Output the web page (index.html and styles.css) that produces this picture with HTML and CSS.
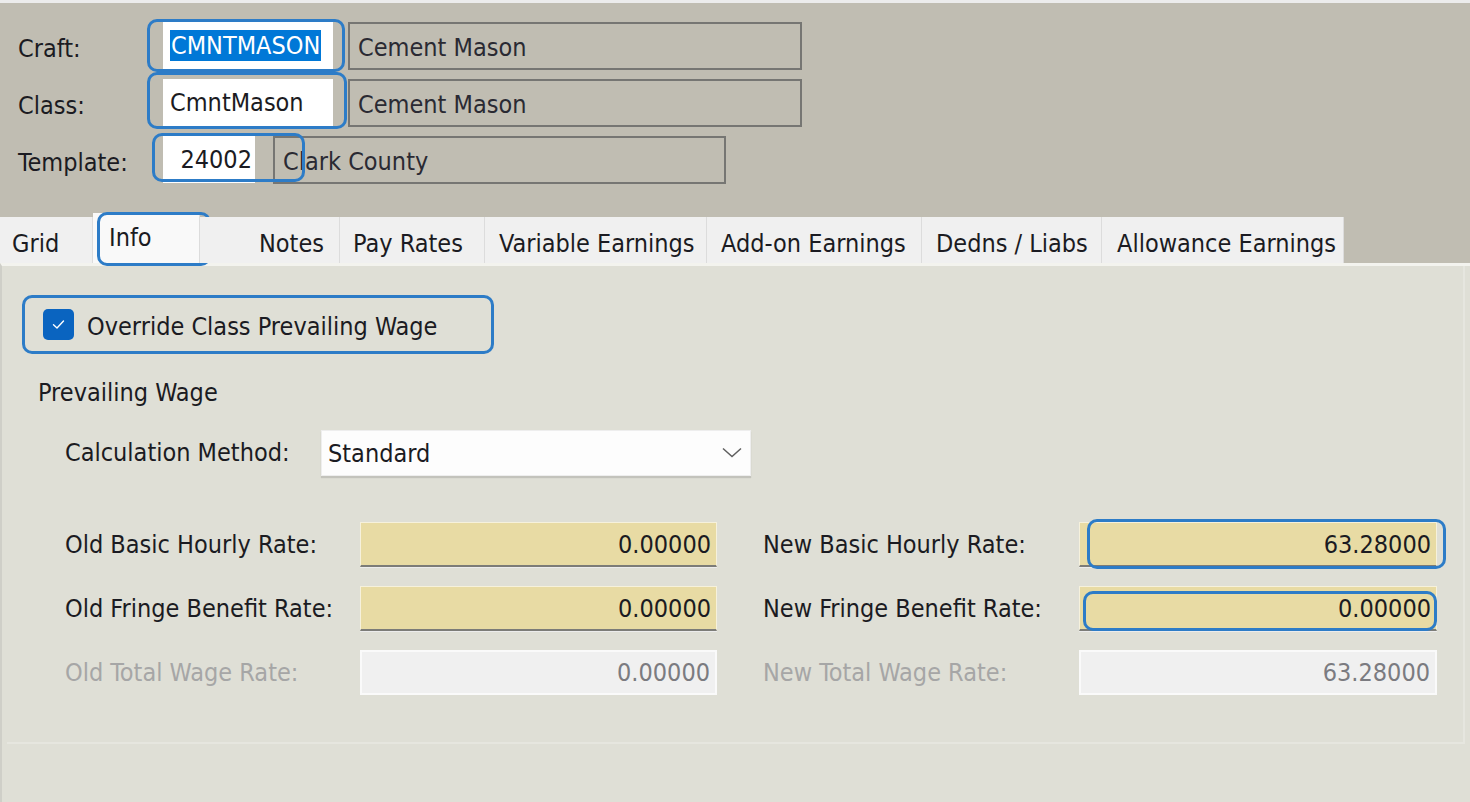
FILE: index.html
```html
<!DOCTYPE html>
<html>
<head>
<meta charset="utf-8">
<link rel="stylesheet" href="styles.css">
</head>
<body>
<div class="window">
  <div class="topline"></div>
  <header class="head">
    <div class="hrow">
      <span class="hlabel">Craft:</span>
      <div class="code code-wide">
        <span class="sel">CMNTMASON</span>
        <span class="mark mark-craft"></span>
      </div>
      <div class="desc desc-wide">Cement Mason</div>
    </div>
    <div class="hrow">
      <span class="hlabel">Class:</span>
      <div class="code code-wide">
        <span class="codetext">CmntMason</span>
        <span class="mark mark-class"></span>
      </div>
      <div class="desc desc-wide">Cement Mason</div>
    </div>
    <div class="hrow">
      <span class="hlabel">Template:</span>
      <div class="code code-narrow">
        <span class="codetext">24002</span>
        <span class="mark mark-template"></span>
      </div>
      <div class="desc desc-narrow">Clark County</div>
    </div>
  </header>
  <nav class="tabs">
    <div class="tab tab-grid">Grid</div>
    <div class="tab tab-info">Info<span class="mark mark-info"></span></div>
    <div class="tab tab-notes">Notes</div>
    <div class="tab tab-pay">Pay Rates</div>
    <div class="tab tab-var">Variable Earnings</div>
    <div class="tab tab-add">Add-on Earnings</div>
    <div class="tab tab-ded">Dedns / Liabs</div>
    <div class="tab tab-allow">Allowance Earnings</div>
  </nav>
  <main class="panel">
    <div class="inner">
      <div class="checkrow">
        <span class="checkbox">
          <svg width="17" height="17" viewBox="0 0 17 17"><path d="M3.5 8.8 L7 12 L13.5 5" fill="none" stroke="#ffffff" stroke-width="1.4" stroke-linecap="round" stroke-linejoin="round"/></svg>
        </span>
        <span class="checklabel">Override Class Prevailing Wage</span>
      </div>
      <div class="group-title">Prevailing Wage</div>
      <div class="calcrow">
        <span class="calclabel">Calculation Method:</span>
        <div class="select">
          <span>Standard</span>
          <svg class="chev" width="20" height="11" viewBox="0 0 20 11"><path d="M1 1.5 L10 9.5 L19 1.5" fill="none" stroke="#5f5f5f" stroke-width="1.5"/></svg>
        </div>
      </div>
      <div class="rates">
        <span class="rlabel">Old Basic Hourly Rate:</span>
        <div class="rinput yellow">0.00000</div>
        <span class="rlabel rlabel-right">New Basic Hourly Rate:</span>
        <div class="rinput yellow">63.28000<span class="mark mark-newbasic"></span></div>

        <span class="rlabel">Old Fringe Benefit Rate:</span>
        <div class="rinput yellow">0.00000</div>
        <span class="rlabel rlabel-right">New Fringe Benefit Rate:</span>
        <div class="rinput yellow">0.00000<span class="mark mark-newfringe"></span></div>

        <span class="rlabel disabled">Old Total Wage Rate:</span>
        <div class="rinput gray">0.00000</div>
        <span class="rlabel rlabel-right disabled">New Total Wage Rate:</span>
        <div class="rinput gray">63.28000</div>
      </div>
    </div>
  </main>
</div>
</body>
</html>
```

FILE: styles.css
```css
* { box-sizing: border-box; }
html, body {
  margin: 0;
  padding: 0;
}
body {
  width: 1470px;
  height: 802px;
  overflow: hidden;
  background: #dfdfd6;
  font-family: "DejaVu Sans Condensed", "DejaVu Sans", sans-serif;
  font-size: 25px;
  color: #1b1b22;
}
.window {
  display: flex;
  flex-direction: column;
  height: 802px;
}
.topline {
  height: 3px;
  background: #ececec;
}
.head {
  background: #c0bdb2;
  padding: 19px 0 30px 18px;
  display: flex;
  flex-direction: column;
  gap: 10px;
}
.hrow {
  display: flex;
  align-items: center;
  height: 47px;
}
.hlabel {
  width: 145px;
  line-height: 28px;
  padding-top: 6px;
}
.code {
  position: relative;
  height: 47px;
  background: #ffffff;
  display: flex;
  align-items: center;
}
.code-wide {
  width: 170px;
  padding-left: 7px;
  margin-right: 15px;
}
.code-narrow {
  width: 92px;
  justify-content: flex-end;
  padding-right: 3px;
  margin-right: 18px;
}
.sel {
  background: #0078d7;
  color: #ffffff;
  line-height: 31px;
  padding: 0 1px;
}
.codetext { line-height: 28px; }
.desc {
  height: 48px;
  border: 2px solid #767673;
  display: flex;
  align-items: center;
  padding-left: 8px;
  padding-top: 3px;
  color: #2a2a33;
}
.desc-wide { width: 454px; }
.desc-narrow { width: 453px; }

.mark {
  position: absolute;
  border: 3px solid #2d7cc7;
  border-radius: 10px;
  pointer-events: none;
}
.mark-craft { top: -3px; bottom: -3px; left: -16px; right: -12px; }
.mark-class { top: -7px; bottom: -3px; left: -16px; right: -14px; }
.mark-template { top: -3px; bottom: 1px; left: -11px; right: -50px; }
.mark-info { top: -1px; bottom: -3px; left: 4px; right: -12px; }
.mark-newbasic { top: -4px; bottom: -4px; left: 7px; right: -10px; }
.mark-newfringe { top: 4px; bottom: -2px; left: 3px; right: -1px; }

.tabs {
  display: flex;
  align-items: flex-end;
  height: 50px;
  background: #c0bdb2;
}
.tab {
  position: relative;
  height: 46px;
  background: #f0f0f0;
  border-right: 1px solid #dcdcdc;
  display: flex;
  align-items: center;
  padding-top: 6px;
  padding-left: 14px;
  white-space: nowrap;
}
.tab-grid { width: 93px; padding-left: 12px; }
.tab-info {
  width: 107px;
  height: 50px;
  background: #f9f9f9;
  padding-left: 16px;
  padding-top: 0;
  padding-bottom: 2px;
}
.tab-notes { width: 140px; padding-left: 59px; }
.tab-pay { width: 145px; padding-left: 13px; }
.tab-var { width: 222px; }
.tab-add { width: 215px; padding-left: 14px; }
.tab-ded { width: 180px; }
.tab-allow { width: 242px; padding-left: 15px; }

.panel {
  flex: 1;
  border-top: 3px solid #f3f3ee;
  border-left: 2px solid #cfcfc8;
  background: #dfdfd6;
}
.inner {
  margin-left: 5px;
  width: 1458px;
  height: 478px;
  border-right: 2px solid #e6e6df;
  border-bottom: 2px solid #e6e6df;
  padding-top: 29px;
  display: flex;
  flex-direction: column;
  align-items: flex-start;
}
.checkrow {
  margin-left: 15px;
  width: 472px;
  height: 59px;
  border: 3px solid #2d7cc7;
  border-radius: 10px;
  display: flex;
  align-items: center;
  padding-left: 18px;
}
.checkbox {
  width: 31px;
  height: 31px;
  border-radius: 5px;
  background: #0a64c0;
  display: flex;
  align-items: center;
  justify-content: center;
}
.checklabel {
  margin-left: 13px;
  line-height: 28px;
  padding-top: 4px;
}
.group-title {
  margin-left: 31px;
  margin-top: 25px;
  line-height: 28px;
}
.calcrow {
  margin-top: 23px;
  margin-left: 58px;
  display: flex;
  align-items: center;
}
.calclabel {
  width: 256px;
  line-height: 28px;
}
.select {
  width: 430px;
  height: 46px;
  background: #fdfdfd;
  border: 1px solid #eeeeee;
  box-shadow: 0 2px 1px rgba(0,0,0,0.12);
  display: flex;
  align-items: center;
  justify-content: space-between;
  padding: 0 8px 0 6px;
}
.chev { margin-top: -2px; }
.rates {
  margin-top: 46px;
  margin-left: 58px;
  display: grid;
  grid-template-columns: 295px 357px 362px 358px;
  grid-auto-rows: 45px;
  row-gap: 19px;
  align-items: center;
}
.rlabel {
  line-height: 28px;
  white-space: nowrap;
}
.rlabel-right { padding-left: 46px; }
.rinput {
  position: relative;
  height: 45px;
  display: flex;
  align-items: center;
  justify-content: flex-end;
  padding-right: 5px;
}
.yellow {
  background: #e8dba4;
  border: 1px solid #f6f1dc;
  border-bottom: 2px solid #7c7c78;
  box-shadow: 0 1px 0 #ececec;
}
.gray {
  background: #f0f0f0;
  border: 2px solid #fafafa;
  color: #7b7b80;
}
.disabled { color: #a6a6a6; }
```
